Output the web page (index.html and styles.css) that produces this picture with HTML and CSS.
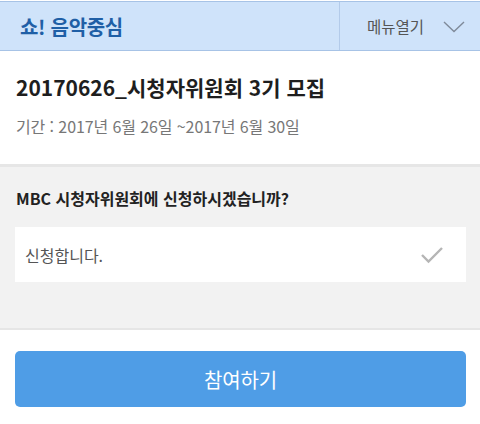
FILE: index.html
```html
<!DOCTYPE html>
<html lang="ko">
<head>
  <meta charset="UTF-8">
  <meta name="viewport" content="width=device-width, initial-scale=1.0">
  <title>쇼! 음악중심</title>
  <link rel="stylesheet" href="styles.css">
</head>
<body>

  <!-- Top bar -->
  <div class="topbar">
    <div class="brand">쇼! 음악중심</div>
    <div class="menu-open">
      <span>메뉴열기</span>
      <svg class="chevron" width="22" height="12" viewBox="0 0 22 12">
        <path d="M1 1 L11 10.5 L21 1" fill="none" stroke="#7f8a99" stroke-width="1.4"/>
      </svg>
    </div>
  </div>

  <!-- Event info -->
  <div class="event-info">
    <h1>20170626_시청자위원회 3기 모집</h1>
    <p class="period">기간 : 2017년 6월 26일 ~2017년 6월 30일</p>
  </div>

  <!-- Question -->
  <div class="question">
    <h2>MBC 시청자위원회에 신청하시겠습니까?</h2>
    <div class="answer">
      <span>신청합니다.</span>
      <svg class="check" width="24" height="18" viewBox="0 0 24 18">
        <path d="M2 9 L8.5 15.5 L22 2" fill="none" stroke="#b5b5b5" stroke-width="2.4"/>
      </svg>
    </div>
  </div>

  <!-- Submit -->
  <div class="actions">
    <button>참여하기</button>
  </div>

</body>
</html>
```

FILE: styles.css
```css
* {
  box-sizing: border-box;
}
body {
  margin: 0;
  font-family: "Noto Sans CJK KR", "Noto Sans", sans-serif;
  background-color: #fff;
  color: #222;
}
.topbar {
  display: flex;
  height: 50px;
  margin-top: 1px;
  background-color: #cfe3fa;
  border-top: 1px solid #a7c3e6;
  border-bottom: 1px solid #a7c3e6;
}
.brand {
  flex: 1;
  display: flex;
  align-items: center;
  padding-left: 20px;
  font-size: 20px;
  font-weight: bold;
  color: #1f5fa6;
  letter-spacing: -0.3px;
  border-right: 1px solid #b3cbea;
}
.menu-open {
  width: 140px;
  display: flex;
  align-items: center;
  padding-left: 27px;
  font-size: 15.5px;
  color: #555;
}
.chevron {
  margin-left: 19px;
  margin-top: 2px;
}
.event-info {
  padding: 19px 16px 0;
  height: 113px;
}
.event-info h1 {
  margin: 0;
  font-size: 21px;
  line-height: 34px;
  font-weight: bold;
  color: #1e1e1e;
}
.period {
  margin: 9px 0 0;
  font-size: 16px;
  line-height: 26px;
  color: #777;
  letter-spacing: -0.1px;
}
.question {
  background-color: #f2f2f2;
  border-top: 3px solid #e6e6e6;
  border-bottom: 2px solid #e6e6e6;
  padding: 18px 14px 46px 15px;
}
.question h2 {
  margin: 0 0 0 1px;
  font-size: 16px;
  line-height: 26px;
  font-weight: bold;
  color: #222;
}
.answer {
  margin-top: 16px;
  height: 55px;
  background-color: #fff;
  display: flex;
  align-items: center;
  justify-content: space-between;
  padding: 0 22px 0 10px;
  font-size: 16px;
  color: #555;
}
.actions {
  padding: 21px 14px 0 15px;
}
.actions button {
  width: 100%;
  height: 56px;
  border: none;
  border-radius: 5px;
  background-color: #4f9de6;
  color: #fff;
  font-family: inherit;
  font-size: 20px;
  letter-spacing: -0.2px;
  cursor: pointer;
}
```
